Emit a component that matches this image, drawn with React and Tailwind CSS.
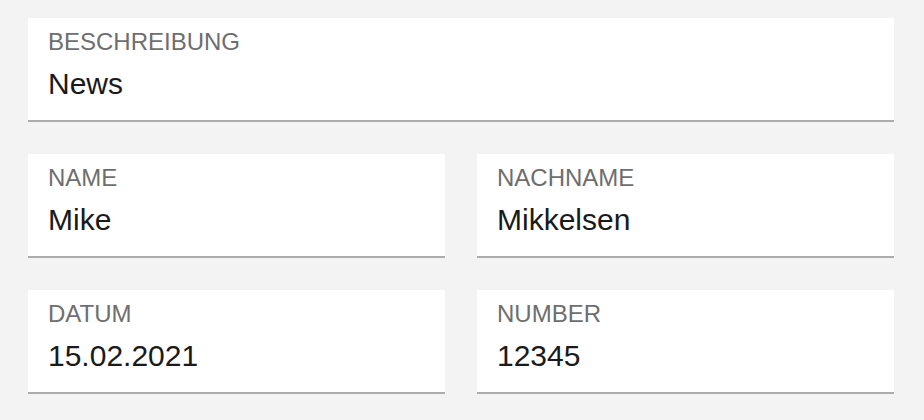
import React from 'react';

const Field = ({ label, value }) => (
  <div className="bg-white border-b-2 border-[#acacac] px-5 pt-[10px] pb-[19px]">
    <div className="text-[24px] leading-[28px] text-[#6e6e6e] uppercase">{label}</div>
    <div className="mt-[11px] text-[30px] leading-[34px] text-[#1a1a1a]">{value}</div>
  </div>
);

const App = () => {
  return (
    <div
      className="min-h-screen w-full bg-[#f3f3f3] pt-[18px] px-[28px] flex flex-col gap-8"
      style={{ fontFamily: '"Liberation Sans", Arial, sans-serif' }}
    >
      <div className="w-[866px]">
        <Field label="Beschreibung" value="News" />
      </div>
      <div className="w-[866px] grid grid-cols-2 gap-8">
        <Field label="Name" value="Mike" />
        <Field label="Nachname" value="Mikkelsen" />
      </div>
      <div className="w-[866px] grid grid-cols-2 gap-8">
        <Field label="Datum" value="15.02.2021" />
        <Field label="Number" value="12345" />
      </div>
    </div>
  );
};

export default App;
